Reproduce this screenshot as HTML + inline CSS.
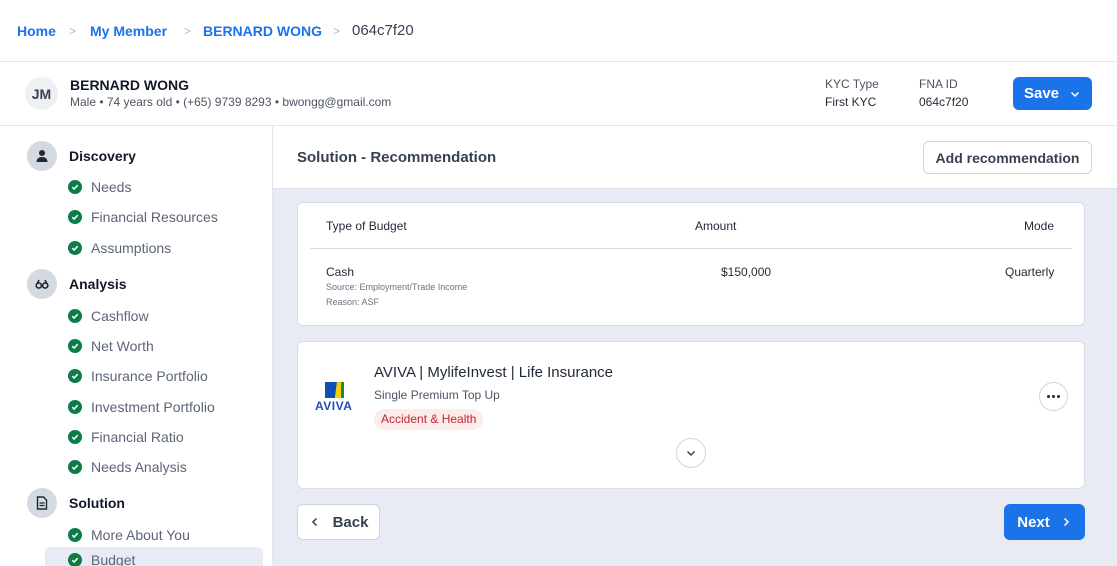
<!DOCTYPE html>
<html><head><meta charset="utf-8"><style>
*{box-sizing:border-box;margin:0;padding:0}
html{width:1117px;height:566px;overflow:hidden}
body{width:1117px;height:566px;overflow:hidden;font-family:"Liberation Sans",sans-serif;background:#fff;position:relative;color:#1f2937}
.a{position:absolute;white-space:nowrap}
.bc{font-size:14px;font-weight:bold;color:#1a73e8;top:23px}
.sep{color:#b0b7c3;font-size:12px;top:24px}
.hd{font-size:14px;font-weight:bold;color:#111827}
.ic{position:absolute;left:27px;width:30px;height:30px;border-radius:50%;background:#d5d9e1;display:flex;align-items:center;justify-content:center}
.it{position:absolute;left:68px;font-size:14px;color:#5b6577;display:flex;align-items:center;gap:9px}
.ck{width:14px;height:14px;border-radius:50%;background:#0e7c48;display:inline-flex;align-items:center;justify-content:center}
.card{position:absolute;background:#fff;border:1px solid #d9dde6;border-radius:6px}
.btn{position:absolute;border-radius:6px;font-size:15px;font-weight:bold;display:flex;align-items:center;justify-content:center}
</style></head><body>
<div class="a bc" style="left:17px">Home</div>
<div class="a sep" style="left:69px">&gt;</div>
<div class="a bc" style="left:90px">My Member</div>
<div class="a sep" style="left:184px">&gt;</div>
<div class="a bc" style="left:203px">BERNARD WONG</div>
<div class="a sep" style="left:333px">&gt;</div>
<div class="a" style="left:352px;top:22px;font-size:15px;color:#374151">064c7f20</div>
<div class="a" style="left:0;top:61px;width:1117px;height:1px;background:#e3e6ec"></div>
<div class="a" style="left:25px;top:77px;width:33px;height:33px;border-radius:50%;background:#eef0f4;font-size:14px;font-weight:bold;color:#374151;display:flex;align-items:center;justify-content:center">JM</div>
<div class="a hd" style="left:70px;top:77px">BERNARD WONG</div>
<div class="a" style="left:70px;top:95px;font-size:12px;color:#4b5563">Male • 74 years old • (+65) 9739 8293 • bwongg@gmail.com</div>
<div class="a" style="left:825px;top:77px;font-size:12px;color:#4b5563">KYC Type</div>
<div class="a" style="left:825px;top:95px;font-size:12px;color:#1f2937">First KYC</div>
<div class="a" style="left:919px;top:77px;font-size:12px;color:#4b5563">FNA ID</div>
<div class="a" style="left:919px;top:95px;font-size:12px;color:#1f2937">064c7f20</div>
<div class="btn" style="left:1013px;top:77px;width:79px;height:33px;background:#1a73e8;color:#fff">Save<svg width="12" height="12" style="margin-left:10px" viewBox="0 0 12 12"><path d="M2.5 4.5l3.5 3.5 3.5-3.5" stroke="#fff" stroke-width="1.5" fill="none"/></svg></div>
<div class="a" style="left:0;top:125px;width:1117px;height:1px;background:#e3e6ec"></div>
<!-- main bg -->
<div class="a" style="left:273px;top:189px;width:844px;height:377px;background:#e8ebf3"></div>
<div class="a" style="left:273px;top:188px;width:844px;height:1px;background:#dde1e8"></div>
<!-- sidebar -->
<div class="a" style="left:272px;top:126px;width:1px;height:440px;background:#e3e6ec"></div>
<div class="ic" style="top:141px"><svg width="14" height="14" viewBox="0 0 14 14"><circle cx="7" cy="4" r="3" fill="#1f2937"/><path d="M1.5 13c0-3.5 2.5-5 5.5-5s5.5 1.5 5.5 5z" fill="#1f2937"/></svg></div>
<div class="a hd" style="left:69px;top:148px">Discovery</div>
<div class="a" style="left:45px;top:547px;width:218px;height:19px;background:#e8ebf3;border-radius:5px 5px 0 0"></div>
<div class="ic" style="top:269px"><svg width="14" height="12" viewBox="0 0 14 12"><circle cx="3.8" cy="7.5" r="2.6" fill="none" stroke="#1f2937" stroke-width="1.6"/><circle cx="10.2" cy="7.5" r="2.6" fill="none" stroke="#1f2937" stroke-width="1.6"/><path d="M2 6l2-4M12 6l-2-4" stroke="#1f2937" stroke-width="1.6"/></svg></div>
<div class="a hd" style="left:69px;top:276px">Analysis</div>
<div class="ic" style="top:488px"><svg width="12" height="14" viewBox="0 0 12 14"><path d="M1.5 1h6l3 3v9h-9z" fill="none" stroke="#1f2937" stroke-width="1.4"/><path d="M3.5 7h5M3.5 9.5h5" stroke="#1f2937" stroke-width="1.2"/></svg></div>
<div class="a hd" style="left:69px;top:495px">Solution</div>
<div id="items"></div>
<div class="a" style="left:297px;top:149px;font-size:15px;font-weight:bold;color:#374151">Solution - Recommendation</div>
<div class="btn" style="left:923px;top:141px;width:169px;height:33px;border:1px solid #d1d5db;background:#fff;color:#374151;font-size:14px">Add recommendation</div>
<div class="card" style="left:297px;top:202px;width:788px;height:124px"></div>
<div class="a" style="left:326px;top:219px;font-size:12px;color:#1f2937">Type of Budget</div>
<div class="a" style="left:695px;top:219px;font-size:12px;color:#1f2937">Amount</div>
<div class="a" style="left:1024px;top:219px;font-size:12px;color:#1f2937">Mode</div>
<div class="a" style="left:310px;top:248px;width:762px;height:1px;background:#d9dde6"></div>
<div class="a" style="left:326px;top:265px;font-size:12px;color:#1f2937">Cash</div>
<div class="a" style="left:326px;top:282px;font-size:9px;color:#6b7280">Source: Employment/Trade Income</div>
<div class="a" style="left:326px;top:297px;font-size:9px;color:#6b7280">Reason: ASF</div>
<div class="a" style="left:721px;top:265px;font-size:12px;color:#1f2937">$150,000</div>
<div class="a" style="left:1005px;top:265px;font-size:12px;color:#1f2937">Quarterly</div>
<div class="card" style="left:297px;top:341px;width:788px;height:148px"></div>
<svg class="a" style="left:325px;top:382px" width="20" height="16" viewBox="0 0 20 16"><path d="M0 0h12l-2 16H0z" fill="#0d4fb3"/><path d="M12 0h4v16h-6z" fill="#f4d000"/><path d="M16 0h3v16h-3z" fill="#1b8a3a"/></svg>
<div class="a" style="left:315px;top:399px;font-size:12px;font-weight:bold;color:#1d4fb5;letter-spacing:.5px">AVIVA</div>
<div class="a" style="left:374px;top:364px;font-size:15px;color:#1f2937">AVIVA | MylifeInvest | Life Insurance</div>
<div class="a" style="left:374px;top:388px;font-size:12px;color:#4b5563">Single Premium Top Up</div>
<div class="a" style="left:374px;top:409px;height:21px;padding:0 7px;border-radius:11px;background:#fdecec;color:#c0262d;font-size:12px;line-height:21px">Accident &amp; Health</div>
<div class="a" style="left:1039px;top:382px;width:29px;height:29px;border-radius:50%;border:1px solid #d1d5db;display:flex;align-items:center;justify-content:center;gap:2px"><i style="width:3px;height:3px;background:#1f2937;border-radius:50%"></i><i style="width:3px;height:3px;background:#1f2937;border-radius:50%"></i><i style="width:3px;height:3px;background:#1f2937;border-radius:50%"></i></div>
<div class="a" style="left:676px;top:438px;width:30px;height:30px;border-radius:50%;border:1px solid #d1d5db;display:flex;align-items:center;justify-content:center"><svg width="12" height="12" viewBox="0 0 12 12"><path d="M2.5 4.5l3.5 3.5 3.5-3.5" stroke="#374151" stroke-width="1.5" fill="none"/></svg></div>
<div class="btn" style="left:297px;top:504px;width:83px;height:36px;background:#fff;border:1px solid #d1d5db;color:#374151"><svg width="12" height="12" style="margin-right:12px" viewBox="0 0 12 12"><path d="M7.5 2.5L4 6l3.5 3.5" stroke="#374151" stroke-width="1.5" fill="none"/></svg>Back</div>
<div class="btn" style="left:1004px;top:504px;width:81px;height:36px;background:#1a73e8;color:#fff">Next<svg width="12" height="12" style="margin-left:10px" viewBox="0 0 12 12"><path d="M4.5 2.5L8 6l-3.5 3.5" stroke="#fff" stroke-width="1.5" fill="none"/></svg></div>
<script>
var it=[["Needs",187],["Financial Resources",217],["Assumptions",248],["Cashflow",316],["Net Worth",346],["Insurance Portfolio",376],["Investment Portfolio",407],["Financial Ratio",437],["Needs Analysis",467],["More About You",535],["Budget",560]];
var h="";it.forEach(function(x){h+='<div class="it" style="top:'+(x[1]-9)+'px;height:18px"><span class="ck"><svg width="8" height="8" viewBox="0 0 8 8"><path d="M1.3 4.2l1.8 1.8 3.6-3.8" stroke="#fff" stroke-width="1.5" fill="none"/></svg></span>'+x[0]+'</div>'});
document.getElementById("items").innerHTML=h;
</script>
</body></html>
